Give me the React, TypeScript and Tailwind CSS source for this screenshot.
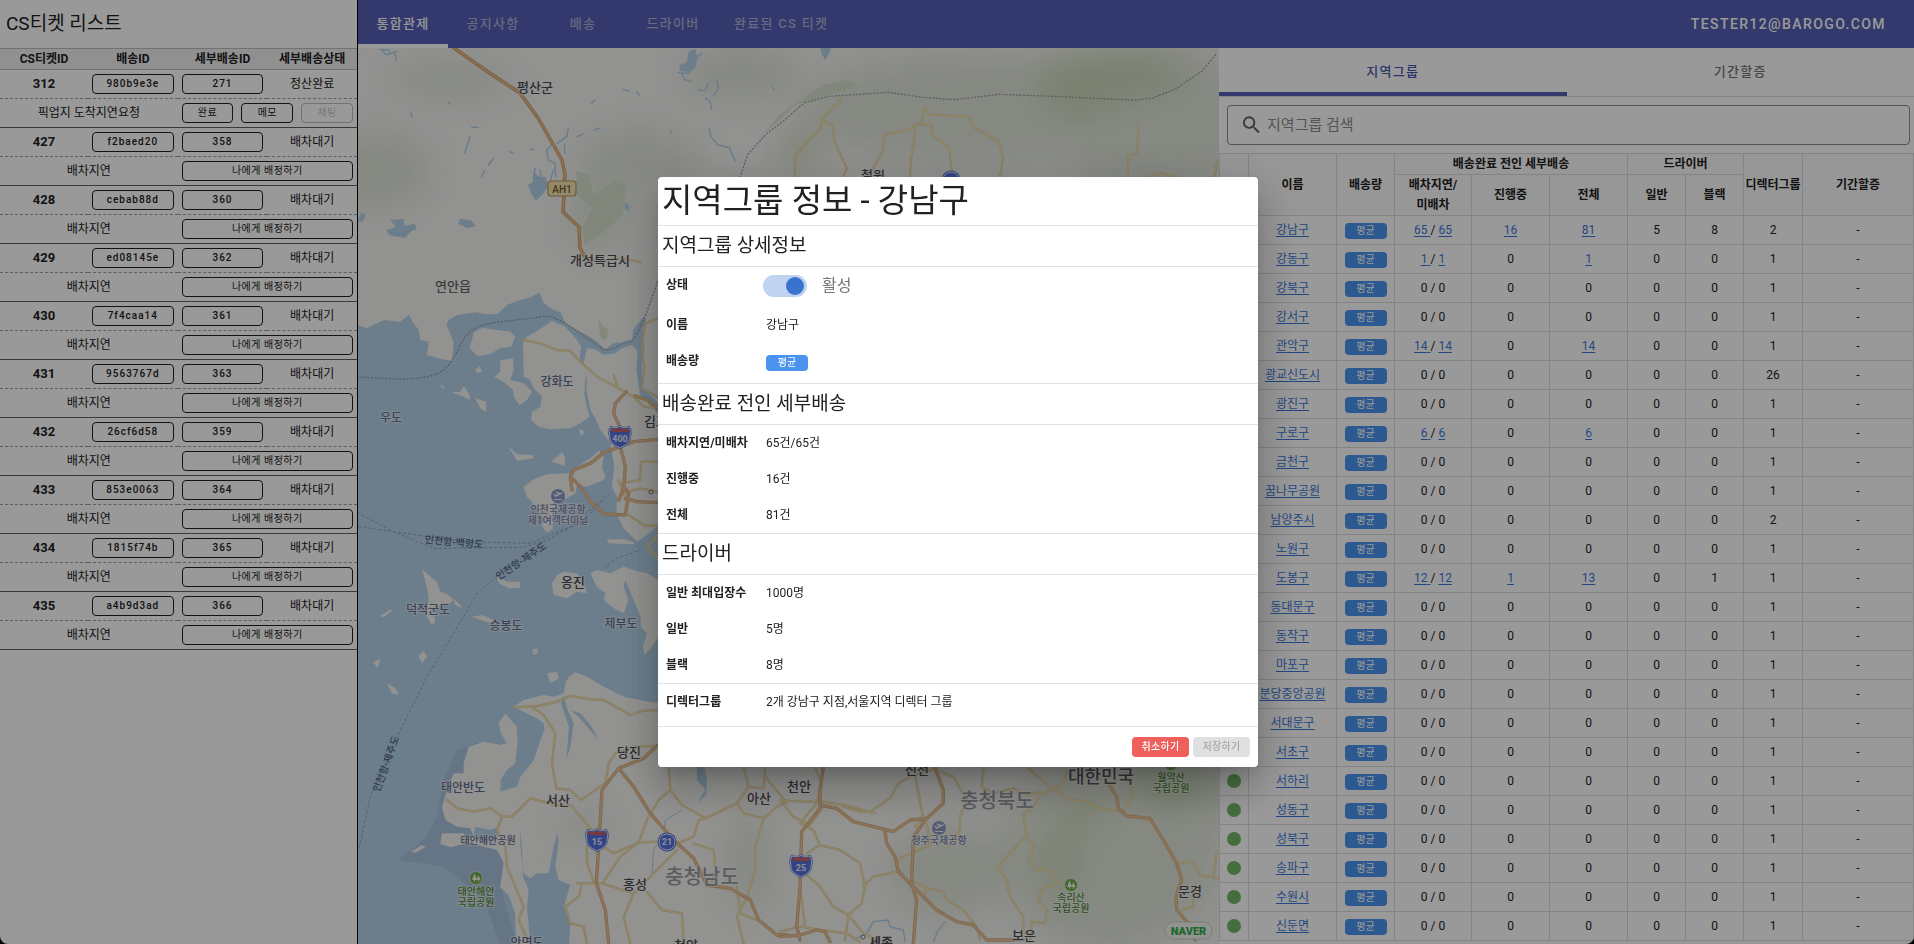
import type { ReactNode } from "react";
import { MdSearch } from "react-icons/md";

const FONT = "font-[Roboto,'Noto_Sans_CJK_KR',sans-serif]";

type Ticket = { id: number; delivery: string; sub: number; status: string; reason: string; mine?: boolean };

const tickets: Ticket[] = [
  { id: 312, delivery: "980b9e3e", sub: 271, status: "정산완료", reason: "픽업지 도착지연요청", mine: true },
  { id: 427, delivery: "f2baed20", sub: 358, status: "배차대기", reason: "배차지연" },
  { id: 428, delivery: "cebab88d", sub: 360, status: "배차대기", reason: "배차지연" },
  { id: 429, delivery: "ed08145e", sub: 362, status: "배차대기", reason: "배차지연" },
  { id: 430, delivery: "7f4caa14", sub: 361, status: "배차대기", reason: "배차지연" },
  { id: 431, delivery: "9563767d", sub: 363, status: "배차대기", reason: "배차지연" },
  { id: 432, delivery: "26cf6d58", sub: 359, status: "배차대기", reason: "배차지연" },
  { id: 433, delivery: "853e0063", sub: 364, status: "배차대기", reason: "배차지연" },
  { id: 434, delivery: "1815f74b", sub: 365, status: "배차대기", reason: "배차지연" },
  { id: 435, delivery: "a4b9d3ad", sub: 366, status: "배차대기", reason: "배차지연" },
];

type Region = { name: string; late?: number; wait?: number; going?: number; total?: number; normal?: number; black?: number; director?: number };

const regions: Region[] = [
  { name: "강남구", late: 65, wait: 65, going: 16, total: 81, normal: 5, black: 8, director: 2 },
  { name: "강동구", late: 1, wait: 1, total: 1 },
  { name: "강북구" },
  { name: "강서구" },
  { name: "관악구", late: 14, wait: 14, total: 14 },
  { name: "광교신도시", director: 26 },
  { name: "광진구" },
  { name: "구로구", late: 6, wait: 6, total: 6 },
  { name: "금천구" },
  { name: "꿈나무공원" },
  { name: "남양주시", director: 2 },
  { name: "노원구" },
  { name: "도봉구", late: 12, wait: 12, going: 1, total: 13, black: 1 },
  { name: "동대문구" },
  { name: "동작구" },
  { name: "마포구" },
  { name: "분당중앙공원" },
  { name: "서대문구" },
  { name: "서초구" },
  { name: "서하리" },
  { name: "성동구" },
  { name: "성북구" },
  { name: "송파구" },
  { name: "수원시" },
  { name: "신둔면" },
];

function OutlineButton({ children, disabled, wide }: { children: ReactNode; disabled?: boolean; wide?: boolean }) {
  return (
    <button
      type="button"
      disabled={disabled}
      className={`block h-5 w-full rounded border text-[10px] leading-4 ${wide ? "font-normal tracking-wider" : "font-medium tracking-widest"} ${
        disabled ? "border-black/25 text-black/25" : "border-[#212121] text-[#212121]"
      }`}
    >
      {children}
    </button>
  );
}

function TicketPanel() {
  return (
    <aside className="flex w-[358px] shrink-0 flex-col border-r border-black bg-white">
      <h1 className="h-12 px-1.5 text-[19px] leading-12">CS티켓 리스트</h1>
      <table className="w-full table-fixed border-collapse text-center text-xs">
        <colgroup>
          <col className="w-[88px]" />
          <col />
          <col />
          <col />
        </colgroup>
        <thead className="bg-[#f0f0f0]">
          <tr className="h-[21px] border-y border-[#bdbdbd]">
            {["CS티켓ID", "배송ID", "세부배송ID", "세부배송상태"].map((h) => (
              <th key={h} className="p-0 leading-5 font-bold">{h}</th>
            ))}
          </tr>
        </thead>
        {tickets.map((t) => (
          <tbody key={t.id} className="border-b border-[#616161]">
            <tr className="h-[29px] border-b border-dashed border-[#9e9e9e]">
              <td className="p-0 text-[13px] font-bold">{t.id}</td>
              <td className="px-1 py-0"><OutlineButton>{t.delivery}</OutlineButton></td>
              <td className="px-1 py-0"><OutlineButton>{t.sub}</OutlineButton></td>
              <td className="p-0">{t.status}</td>
            </tr>
            <tr className="h-[29px]">
              <td colSpan={2} className="p-0">{t.reason}</td>
              <td colSpan={2} className="px-1 py-0">
                {t.mine ? (
                  <div className="flex gap-2">
                    <OutlineButton wide>완료</OutlineButton>
                    <OutlineButton wide>메모</OutlineButton>
                    <OutlineButton wide disabled>채팅</OutlineButton>
                  </div>
                ) : (
                  <OutlineButton wide>나에게 배정하기</OutlineButton>
                )}
              </td>
            </tr>
          </tbody>
        ))}
      </table>
    </aside>
  );
}

function TopBar() {
  return (
    <header className="flex h-12 shrink-0 items-stretch bg-[#5560b4] text-white">
      <nav className="flex text-[13px] font-medium tracking-widest">
        {["통합관제", "공지사항", "배송", "드라이버", "완료된 CS 티켓"].map((label, i) => (
          <a
            key={label}
            href="#"
            className={`flex min-w-[90px] items-center justify-center border-y-4 border-t-transparent px-4 ${
              i === 0 ? "border-b-white" : "border-b-transparent text-white/50"
            }`}
          >
            {label}
          </a>
        ))}
      </nav>
      <button type="button" className="ml-auto px-7 text-sm font-medium tracking-widest uppercase">tester12@barogo.com</button>
    </header>
  );
}

function Volume() {
  return (
    <span className="block h-4 w-[42px] rounded bg-[#4a94f0] text-center text-[10px] leading-4 text-white">평균</span>
  );
}

function Count({ value, children }: { value: number; children?: ReactNode }) {
  if (!value) return <>0{children}</>;
  return (
    <a href="#" className="text-[#3b78d8] underline underline-offset-2">{value}{children}</a>
  );
}

function RegionPanel() {
  const th = "border border-[#dcdcdc] p-0 font-bold";
  const td = "border border-[#dcdcdc] p-0";
  return (
    <section className="flex w-[695px] shrink-0 flex-col overflow-hidden bg-white">
      <div className="flex h-[49px] shrink-0 border-b border-[#dcdcdc] text-[13px] font-medium tracking-widest">
        <button type="button" className="flex-1 border-y-4 border-t-transparent border-b-[#5560b4] text-[#4a55b0]">지역그룹</button>
        <button type="button" className="flex-1 border-y-4 border-transparent text-[#757575]">기간할증</button>
      </div>
      <label className="mx-2 mt-2 mb-2 mr-1 flex h-10 shrink-0 items-center gap-1 rounded border border-[#8c8c8c] pl-3">
        <MdSearch className="size-6 text-[#616161]" />
        <input
          type="search"
          aria-label="지역그룹 검색"
          placeholder="지역그룹 검색"
          className="w-full bg-transparent text-[15px] outline-none placeholder:text-[#8c8c8c]"
        />
      </label>
      <table className="w-full table-fixed border-collapse text-center text-xs">
        <colgroup>
          <col className="w-[29px]" />
          <col className="w-[88px]" />
          <col className="w-[58px]" />
          <col className="w-[77px]" />
          <col className="w-[78px]" />
          <col className="w-[78px]" />
          <col className="w-[58px]" />
          <col className="w-[58px]" />
          <col className="w-[59px]" />
          <col />
        </colgroup>
        <thead className="bg-[#fcfcfc]">
          <tr className="h-[21px]">
            <th rowSpan={2} className={th} />
            <th rowSpan={2} className={th}>이름</th>
            <th rowSpan={2} className={th}>배송량</th>
            <th colSpan={3} className={th}>배송완료 전인 세부배송</th>
            <th colSpan={2} className={th}>드라이버</th>
            <th rowSpan={2} className={th}>디렉터그룹</th>
            <th rowSpan={2} className={th}>기간할증</th>
          </tr>
          <tr className="h-[41px] leading-5">
            <th className={th}>배차지연/<br />미배차</th>
            <th className={th}>진행중</th>
            <th className={th}>전체</th>
            <th className={th}>일반</th>
            <th className={th}>블랙</th>
          </tr>
        </thead>
        <tbody>
          {regions.map((r) => (
            <tr key={r.name} className="h-[29px] whitespace-nowrap">
              <td className={td}><span className="mx-auto block size-3.5 rounded-full bg-[#72b866]" /></td>
              <td className={td}><a href="#" className="text-[#3b78d8] underline underline-offset-2">{r.name}</a></td>
              <td className={`${td} pt-0.5`}><span className="flex justify-center"><Volume /></span></td>
              <td className={td}><Count value={r.late ?? 0}> </Count>{"/ "}<Count value={r.wait ?? 0} /></td>
              <td className={td}><Count value={r.going ?? 0} /></td>
              <td className={td}><Count value={r.total ?? 0} /></td>
              <td className={td}>{r.normal ?? 0}</td>
              <td className={td}>{r.black ?? 0}</td>
              <td className={td}>{r.director ?? 1}</td>
              <td className={td}>-</td>
            </tr>
          ))}
        </tbody>
      </table>
    </section>
  );
}

/* ---------- map ---------- */

const SEA =
  "M0,135 30,145 55,132 80,120 130,125 155,105 170,130 185,150 190,180 215,185 210,225 250,236 285,242 290,190 280,160 268,135 275,120 300,105 355,97 385,103 420,103 450,75 490,60 520,52 548,38 560,70 590,90 610,95 625,130 660,150 690,165 720,185 745,208 770,190 800,185 825,178 828,150 835,140 860,110 868,118 856,150 862,200 855,250 855,320 905,370 905,402 850,345 838,270 842,215 825,195 795,205 775,220 740,225 715,208 690,205 680,250 690,300 688,330 700,390 718,420 730,450 760,490 772,560 765,620 780,650 778,700 800,745 840,785 870,765 905,735 1100,900 1100,1290 905,1270 860,1262 800,1250 740,1220 690,1190 655,1177 635,1190 625,1210 620,1240 590,1250 560,1245 500,1260 470,1280 500,1295 540,1315 560,1330 562,1350 550,1380 530,1440 490,1490 480,1520 430,1535 430,1500 450,1470 475,1450 480,1400 495,1350 470,1330 445,1300 425,1330 432,1360 450,1390 430,1395 380,1385 335,1400 320,1450 320,1480 290,1480 270,1530 255,1580 265,1620 300,1640 340,1645 370,1680 320,1650 250,1660 250,1695 320,1705 420,1705 440,1750 430,1820 455,1845 475,1900 478,1995 0,1995Z";

const ISLANDS = [
  "M350,158 375,143 420,150 460,155 475,170 462,200 430,205 400,222 362,228 338,205Z",
  "M498,180 510,170 545,150 585,122 625,140 660,180 672,200 668,235 690,260 685,300 682,345 690,380 698,410 670,430 640,445 580,448 545,440 522,420 525,395 550,380 555,350 530,325 520,300 500,290Z",
  "M430,240 468,235 470,270 460,300 500,310 525,335 510,360 488,375 470,350 468,330 440,305 412,290 430,275Z",
  "M283,337 310,335 320,318 338,345 340,360 315,348Z M355,355 388,365 388,397 370,385Z M248,313 268,325 255,325Z M355,270 368,258 375,275 360,278Z",
  "M450,497 480,522 530,525 528,535 480,542 470,525Z M582,545 600,530 615,517 625,535 622,558 600,550Z M665,445 685,455 672,467Z",
  "M500,620 530,598 570,583 640,580 660,560 700,535 725,512 740,530 735,565 745,585 740,600 690,620 660,615 655,640 630,655 590,662 595,690 585,700 588,745 570,758 555,740 560,715 545,690 510,650Z",
  "M750,778 800,778 832,786 830,793 755,790Z M420,890 450,905 490,905 488,925 455,925 425,910Z",
  "M195,868 215,885 240,905 250,935 270,942 290,960 280,970 240,980 232,1000 235,1025 225,1035 210,1010 215,950 208,915Z M290,955 310,975 315,985 295,975Z",
  "M585,910 600,885 620,875 660,880 680,910 690,940 660,935 630,955 590,945Z",
  "M700,880 720,870 760,880 800,860 838,872 870,880 905,900 905,1070 885,1100 862,1125 858,1100 870,1060 852,1040 850,1010 830,960 805,900 800,920 815,960 800,1000 770,985 740,960 745,940 720,920Z",
  "M185,1128 200,1112 210,1130 195,1150Z M90,1210 115,1225 125,1245 105,1240Z M48,1145 70,1138 62,1165Z M345,1010 375,1005 410,1020 400,1030Z M525,1110 540,1105 542,1120 530,1125Z M570,1180 600,1175 605,1195 580,1210Z M70,1008 100,988 105,992 80,1012Z",
  "M255,1660 320,1660 330,1690 280,1702 250,1692Z M160,1715 195,1695 205,1702 175,1718Z",
];

const BAYS = [
  "M488,1645 495,1700 498,1790 515,1830 510,1880 520,1995 636,1995 640,1930 620,1880 640,1815 605,1800 595,1760 605,1680 600,1660 590,1700 575,1780 540,1780 520,1795 500,1780 492,1720Z",
  "M620,1245 632,1290 650,1330 640,1400 628,1440 636,1340 612,1270Z",
  "M640,1290 670,1300 700,1335 725,1380 690,1340 665,1310Z",
  "M355,1640 400,1650 425,1640 420,1680 380,1690 350,1665Z",
  "M1020,1462 1042,1462 1050,1500 1048,1545 1020,1570 1045,1530 1020,1500Z",
];

const PONDS =
  "M90,148l25,2l8,10l18,-6M98,152l10,12l18,-4M135,160l4,22M302,312l-8,-6M182,335l4,16M360,410l-8,25l-8,25M365,382h20M1055,160l-15,15M1035,185l-10,25l-12,10l-28,-2M995,220l10,20l20,5M1045,270l20,2l10,-20M1420,148l8,20l-4,10M1078,385l5,25l20,25l35,8l18,40M735,300l-10,10M655,385l-5,25l-28,20M748,385l-15,5M700,402l-20,8M610,430l-20,20l5,30l20,10l2,40M645,460l-2,-28M555,505l-5,30M570,512l5,28M610,510l-8,30M540,448h12M480,455l10,6M430,475l-15,20M405,510l-10,20M1065,295l15,8l5,25M1100,240l6,25l-14,20M820,268l18,6M860,275l8,10M1268,262l5,8M960,392l4,8";
const LAKES =
  "M60,515l25,-2l2,20l18,-6l4,15l-10,8l-12,20l-28,-8l-6,-16l18,-8z M188,512l20,5l8,18l-14,6l-18,-14z M312,410l8,-8l2,-30l10,14l12,0l4,30l-10,24l-12,18l-8,-20z M488,462l8,10l0,20l-8,-10z M0,520l8,-28l8,10l-6,20z M605,10l12,-8l4,30l-4,28l-12,12l-18,-4l2,-18l12,-6z M845,0h18v10l-8,24l-8,-12z";

const MINOR = [
  ["translate(357 470)", "M470,712L545,708L600,695L640,678L700,688L740,690L820,735L860,722L903,720 M525,712L560,735L595,790L585,880L598,955L640,960L672,990L745,940L755,880L775,850L830,830L900,828 M270,990L300,1015L350,1025L400,1015L435,1040L465,1040L520,985L600,1005L640,1005L700,1075 M435,1040L420,1080L445,1130L450,1190L500,1310L485,1350L515,1420 M845,1118L870,1050L905,990L940,960L935,890 M940,960L975,1005L1045,1045L1140,1000L1175,950L1160,890 M845,1118L900,1115L960,1120L1010,1100L1025,1050L1045,1045 M700,1080L720,1120L770,1150L845,1118 M740,1235L790,1160L845,1118 M660,1240L735,1240L830,1270L870,1230L960,1140 M830,1270L800,1340L820,1422 M870,1265L915,1320L975,1330L980,1422 M690,1130L690,1180L710,1235 M640,1360L625,1310L665,1280L675,1240 M640,1360L680,1370L690,1422 M1010,1120L1070,1140L1075,1200L1060,1250 M1140,1000L1160,1030L1220,1045L1260,1010L1290,995 M1220,1045L1195,1130L1195,1200L1170,1280L1140,1340L1160,1422 M1175,950L1220,955L1225,890 M1225,920L1290,1000 M1140,1250L1150,1330L1200,1350 M870,230L903,195 M870,230L903,265"],
  ["translate(357 280)", "M498,180L550,190L600,210L640,212L670,245L720,290L780,322L830,350L860,380L903,385 M770,285L782,322 M903,115L865,130L855,200L862,260L855,325L903,352 M903,545L852,545L850,600L790,610L800,640L850,625L903,635 M815,705L860,735L903,738 M785,600L800,645"],
  ["translate(780 740)", "M105,82L125,130L110,190L60,250L100,270L120,315L180,330L240,370L255,440L245,490L205,525L195,600 M0,180L60,185L130,185L190,195L270,215L330,175L355,130L400,105L470,85 M190,200L240,215L285,218 M0,180L40,230L90,255L130,200 M120,315L80,340 M75,400L120,440L160,500L205,525L250,580L290,600 M405,105L430,235L405,260 M480,95L520,110L560,180L540,230L540,270L505,320 M610,85L605,140L640,160L700,145L740,165L780,155 M745,85L800,130L820,150 M820,150L780,165L760,200L730,225L740,285L690,340L650,385L680,420L690,470L730,530L730,600 M735,290L765,320L745,355L765,390L800,385L835,430L790,445L775,480L800,510L795,550L755,545L750,600 M820,145L870,180L920,185L960,205L1020,215 M820,148L850,130L860,95 M1030,215L1055,170L1045,100 M1190,370L1240,365L1260,405L1315,415 M1310,340L1300,410 M395,440L350,380L360,355L450,315L440,250 M405,425L440,445L490,455L500,480L550,510L590,560L600,600 M430,470L440,445 M250,440L280,410L350,395 M0,575L60,560L120,570L200,580L240,605 M60,440L75,560 M1240,440L1240,500L1205,510"],
];

const NORTH_MINOR =
  "M883,150L848,215L845,240L800,320L798,390 M848,215L868,235L870,280L893,360L885,390 M1035,178L1028,225L1005,245L962,260L958,310L940,365 M1035,178L1045,200L1115,205L1125,240L1170,280L1178,330L1172,390 M1018,230L1015,290L1010,330L1008,390 M1028,230H1048L1048,260L1080,300L1084,370 M1425,235L1422,318L1407,320L1405,390 M1440,390L1465,375L1490,385 M1568,340L1563,390 M415,625L440,640L480,630L518,643";

const MAJOR = [
  ["translate(357 280)", "M808,335L775,370L770,400L788,440L790,500L805,560L800,625L785,660 M903,478L830,485L740,518L700,550L650,570L640,590L645,630 M640,590L670,620L705,670L740,702L805,705L815,640L800,620 M805,655L840,665L903,668 M835,348L870,360L903,385"],
  ["translate(357 470)", "M903,825L860,865L785,895L735,960L728,1080L718,1240L745,1320L755,1422 M785,895L830,950L880,1030L950,1110L1010,1165L1050,1245L1120,1255L1180,1290L1205,1350L1260,1395L1290,1395"],
  ["translate(780 740)", "M130,82L120,150L120,205L65,275L60,440L50,560L60,600 M120,195L170,205L220,245L340,275L390,240L440,235L490,190L490,150L475,110L465,82 M440,235L400,290L395,430L410,480L400,612 M315,275L320,310L345,350L355,395L400,440L470,510L530,545L580,555L620,600L700,600 M985,130L1010,170L1015,205L1040,228L1110,235L1150,300L1190,370L1205,420L1188,470L1190,510L1225,550L1245,600 M0,590L60,585L110,570L135,575L150,605"],
];

type Label = { x: number; y: number; t: string; s?: number; c?: string; r?: number; w?: number };
const DARK = "#4a4a50";
const BLUE = "#626f93";
const GREEN = "#4d8a3a";
const labels: Label[] = [
  { x: 535, y: 87, t: "평산군" },
  { x: 600, y: 260, t: "개성특급시" },
  { x: 453, y: 286, t: "연안읍", c: "#666" },
  { x: 873, y: 175, t: "철원" },
  { x: 557, y: 382, t: "강화도", c: BLUE, s: 12 },
  { x: 391, y: 418, t: "우도", c: BLUE, s: 12 },
  { x: 656, y: 421, t: "김포" },
  { x: 558, y: 509, t: "인천국제공항", c: "#7881ac", s: 10 },
  { x: 558, y: 520, t: "제1여객터미널", c: "#7881ac", s: 10 },
  { x: 454, y: 542, t: "인천항-백령도", c: "#52647c", s: 10, r: 5 },
  { x: 521, y: 561, t: "인천항-제주도", c: "#52647c", s: 10, r: -34 },
  { x: 386, y: 764, t: "인천항-제주도", c: "#52647c", s: 10, r: -70 },
  { x: 573, y: 582, t: "옹진" },
  { x: 428, y: 610, t: "덕적군도", c: BLUE, s: 12 },
  { x: 506, y: 626, t: "승봉도", c: BLUE, s: 12 },
  { x: 621, y: 624, t: "제부도", c: BLUE, s: 12 },
  { x: 629, y: 752, t: "당진" },
  { x: 463, y: 788, t: "태안반도", c: BLUE, s: 12 },
  { x: 558, y: 800, t: "서산" },
  { x: 759, y: 798, t: "아산" },
  { x: 799, y: 786, t: "천안" },
  { x: 488, y: 840, t: "태안해안공원", c: BLUE, s: 10 },
  { x: 702, y: 877, t: "충청남도", c: "#96999f", s: 20 },
  { x: 635, y: 884, t: "홍성" },
  { x: 476, y: 891, t: "태안해안", c: GREEN, s: 10 },
  { x: 476, y: 902, t: "국립공원", c: GREEN, s: 10 },
  { x: 527, y: 943, t: "안면도", c: BLUE, s: 12 },
  { x: 686, y: 945, t: "청양" },
  { x: 997, y: 801, t: "충청북도", c: "#96999f", s: 20 },
  { x: 917, y: 769, t: "진천" },
  { x: 939, y: 840, t: "청주국제공항", c: "#7881ac", s: 10 },
  { x: 1101, y: 777, t: "대한민국", c: "#5a5a60", s: 18 },
  { x: 1171, y: 777, t: "월악산", c: GREEN, s: 10 },
  { x: 1171, y: 788, t: "국립공원", c: GREEN, s: 10 },
  { x: 1071, y: 897, t: "속리산", c: GREEN, s: 10 },
  { x: 1071, y: 908, t: "국립공원", c: GREEN, s: 10 },
  { x: 1190, y: 891, t: "문경" },
  { x: 1024, y: 935, t: "보은" },
  { x: 881, y: 942, t: "세종", w: 700 },
];

function Shield({ x, y, n }: { x: number; y: number; n: string }) {
  return (
    <g transform={`translate(${x} ${y})`}>
      <path d="M-9,-10Q-5,-8 0,-10.500Q5,-8 9,-10Q12,-6 10,0Q11,6 0,11Q-11,6 -10,0Q-12,-6 -9,-10Z" fill="#5572dc" stroke="#5572dc" strokeWidth="2" />
      <path d="M-9,-10Q-5,-8 0,-10.500Q5,-8 9,-10Q12,-6 10,0Q11,6 0,11Q-11,6 -10,0Q-12,-6 -9,-10Z" fill="#5572dc" stroke="#e8ecfa" strokeWidth="1" />
      <path d="M-7.500,-8.500H7.500L9,-5H-9Z" fill="#c8606a" />
      <text y="5" textAnchor="middle" fontSize="9" fontWeight="700" fill="#e8ecfa">{n}</text>
    </g>
  );
}

function ParkIcon({ x, y }: { x: number; y: number }) {
  return (
    <g transform={`translate(${x} ${y})`}>
      <circle r="6.500" fill="#74a852" stroke="#d6efc4" strokeWidth="0.800" />
      <path d="M-1.500,-4.500L1,2H-1V3.500H-2V2H-4Z M2.500,-2.500L4.500,2H3V3.500H2V2H1.300L0.800,0.500Z" fill="#f2f8ec" />
    </g>
  );
}

function AirportIcon({ x, y }: { x: number; y: number }) {
  return (
    <g transform={`translate(${x} ${y})`}>
      <circle r="7" fill="#8f98c4" />
      <path d="M-4.500,-1.500L-3.500,-2L-2,-1L0,-2L-2.500,-4L-1.500,-4.500L2,-3L4.500,-3.800L5,-3L-2.500,1Z M-4,3H4V4H-4Z" fill="#f2f3fa" />
    </g>
  );
}

function MapView() {
  return (
    <svg
      viewBox="358 48 861 896"
      preserveAspectRatio="xMidYMid slice"
      role="img"
      aria-label="지도"
      className="h-full w-full bg-[#f3f3f1]"
    >
      <defs>
        <filter id="soft" x="-30%" y="-30%" width="160%" height="160%">
          <feGaussianBlur stdDeviation="16" />
        </filter>
      </defs>
      <g filter="url(#soft)">
        <g fill="#dfe4d8">
          <ellipse cx="375" cy="170" rx="55" ry="38" />
          <ellipse cx="640" cy="160" rx="60" ry="30" />
          <ellipse cx="740" cy="75" rx="60" ry="25" />
          <ellipse cx="980" cy="110" rx="180" ry="55" />
          <ellipse cx="1150" cy="120" rx="100" ry="80" />
          <ellipse cx="600" cy="215" rx="28" ry="36" />
          <ellipse cx="950" cy="870" rx="60" ry="45" />
          <ellipse cx="1110" cy="850" rx="110" ry="100" />
          <ellipse cx="1190" cy="800" rx="50" ry="50" />
          <ellipse cx="750" cy="860" rx="22" ry="50" />
          <ellipse cx="585" cy="825" rx="20" ry="14" />
          <ellipse cx="450" cy="80" rx="60" ry="16" />
        </g>
        <g fill="#cdd9bd">
          <ellipse cx="1110" cy="75" rx="75" ry="26" />
          <ellipse cx="1080" cy="100" rx="40" ry="18" />
          <ellipse cx="800" cy="150" rx="20" ry="18" />
          <ellipse cx="1085" cy="815" rx="24" ry="16" />
          <ellipse cx="1060" cy="860" rx="18" ry="36" />
          <ellipse cx="1170" cy="785" rx="36" ry="24" />
        </g>
      </g>
      <path transform="translate(357 48) scale(.5485 .3333)" d="M400,370L425,380L430,440L470,400L490,410L485,500L460,540L415,590L410,540L430,480L400,440Z M770,200L850,110L895,95L915,115L870,135L800,170L740,260Z" fill="#d5dfc8" opacity="0.8" />

      <g transform="translate(357 280) scale(.33333)">
        <path d={SEA} fill="#b5d2ea" />
        <path d="M120,1740L200,1680L240,1610L260,1500L300,1410L355,1390L380,1385L380,1500L440,1750L430,1820L480,1995L430,1995L380,1860L260,1760Z" fill="#aac4de" />
        <path
          d="M335,1400L320,1450L320,1480L290,1480L270,1530L255,1580L265,1620L300,1640L340,1645L350,1670L300,1680L420,1710L440,1750L430,1820L455,1845L475,1900L478,1995H520L510,1880L515,1830L498,1790L488,1645L560,1500L430,1535L430,1395L380,1385Z"
          fill="#f3f3f1"
        />
        {ISLANDS.map((d) => <path key={d} d={d} fill="#f3f3f1" />)}
        {BAYS.map((d) => <path key={d} d={d} fill="#b5d2ea" />)}
        <path d="M478,1320L510,1305L545,1330L550,1380L530,1440L490,1490L430,1535L440,1490L478,1450L482,1390Z" fill="#b5d2ea" />
        <path d="M725,115L738,140L755,150L750,175L735,182L728,160Z" fill="#dbe5c8" />
      </g>

      <g fill="none" stroke="#abcde8" strokeLinecap="round">
        <g transform="translate(350 0) scale(.33333)"><path strokeWidth="4" d={PONDS} /></g>
        <g transform="translate(780 740) scale(.33333)"><path strokeWidth="4" d="M220,600L260,580L280,545L325,540L330,560L370,570L375,605 M460,605L475,570L495,545" /></g>
        <g transform="translate(357 470) scale(.33333)"><path strokeWidth="3" d="M975,1020L925,1050L920,1100L890,1140L885,1210" /></g>
      </g>
      <path transform="translate(357 48) scale(.5485 .3333)" d={LAKES} fill="#b5d2ea" />

      <g fill="none" stroke="#94979c" strokeWidth="1.200" strokeDasharray="2 1.500">
        <path transform="translate(357 280) scale(.33333)" vectorEffect="non-scaling-stroke" d="M0,290C80,296 170,302 220,288C300,270 300,180 345,150C390,120 480,125 560,108C620,110 680,175 745,210C770,212 790,188 825,185C850,150 870,100 903,0" />
        <path transform="translate(357 48) scale(.5485 .3333)" vectorEffect="non-scaling-stroke" d="M698,390L712,320L745,260L780,215L815,165L860,145L970,133L1030,148L1090,155L1170,139L1300,147L1420,157L1450,150L1490,125L1540,70L1568,15" />
      </g>
      <g fill="none" stroke="#8aa2bf" strokeWidth="1" strokeDasharray="3 2">
        <path transform="translate(357 470) scale(.33333)" vectorEffect="non-scaling-stroke" d="M0,128L110,185L230,235L500,232L570,210L680,150L740,90 M5,170L180,195L330,215L520,220L640,170L765,65 M555,225L430,310L360,370L290,490L210,620L120,800L40,980L5,1140 M740,295L780,265L850,240" />
      </g>

      <g fill="none" strokeLinejoin="round" strokeLinecap="round">
        {MINOR.map(([t, d]) => (
          <g key={t} transform={`${t} scale(.33333)`}>
            <path d={d} stroke="#dccb9c" strokeWidth="7" />
            <path d={d} stroke="#f1dfae" strokeWidth="4" />
          </g>
        ))}
        <g transform="translate(357 48) scale(.5485 .3333)">
          <path d={NORTH_MINOR} stroke="#dccb9c" strokeWidth="2.200" vectorEffect="non-scaling-stroke" />
          <path d={NORTH_MINOR} stroke="#f1dfae" strokeWidth="1.200" vectorEffect="non-scaling-stroke" />
        </g>
        {MAJOR.map(([t, d]) => (
          <g key={t} transform={`${t} scale(.33333)`}>
            <path d={d} stroke="#cfa77c" strokeWidth="10" />
            <path d={d} stroke="#e8c294" strokeWidth="6" />
          </g>
        ))}
        <path d="M454,48L488,72L520,93L538,118L562,160L565,175L563,212L579,227L580,248L585,257" stroke="#c79a68" strokeWidth="3.500" />
        <path d="M454,48L488,72L520,93L538,118L562,160L565,175L563,212L579,227L580,248L585,257" stroke="#e6bb84" strokeWidth="2" />
      </g>

      <rect x="548" y="181" width="28" height="15" rx="3" fill="#f5e6b4" stroke="#bf9558" strokeWidth="1.200" />
      <text x="562" y="192.500" textAnchor="middle" fontSize="10" fontWeight="500" fill="#7a5a2a">AH1</text>

      <Shield x={620} y={437} n="400" />
      <Shield x={597} y={840} n="15" />
      <Shield x={801} y={866} n="25" />
      <g textAnchor="middle" fontSize="9" fontWeight="700" fill="#e8ecfa">
        <circle cx="667" cy="842" r="9.500" fill="#5572dc" />
        <circle cx="667" cy="842" r="8" fill="#5572dc" stroke="#e8ecfa" />
        <text x="667" y="845">21</text>
        <circle cx="951" cy="180" r="9.500" fill="#5572dc" />
        <circle cx="951" cy="180" r="8" fill="#5572dc" stroke="#e8ecfa" />
      </g>
      <circle cx="651" cy="492" r="2" fill="#fff" stroke="#666" />
      <circle cx="863" cy="937" r="2" fill="#fff" stroke="#777" />
      <AirportIcon x={558} y={496} />
      <AirportIcon x={939} y={828} />
      <ParkIcon x={476} y={878} />
      <ParkIcon x={1071} y={885} />
      <ParkIcon x={1171} y={764} />

      <g textAnchor="middle" stroke="#f5f4f2" strokeWidth="2" strokeLinejoin="round" paintOrder="stroke">
        {labels.map((l) => {
          const size = l.s ?? 13;
          return (
            <text
              key={`${l.t}${l.x}${l.y}`}
              x={l.x}
              y={l.y}
              dy="0.36em"
              fontSize={size}
              fontWeight={l.w ?? 500}
              fill={l.c ?? DARK}
              strokeOpacity={l.r ? 0 : 0.6}
              transform={l.r ? `rotate(${l.r} ${l.x} ${l.y})` : undefined}
            >
              {l.t}
            </text>
          );
        })}
      </g>

      <rect x="1165" y="922" width="47" height="17" rx="8.500" fill="#f3f3f1" stroke="#cfcfcf" />
      <text x="1188.500" y="934.500" textAnchor="middle" fontSize="11" fontWeight="900" fill="#35b04f">NAVER</text>
    </svg>
  );
}

/* ---------- dialog ---------- */

function Row({ label, children, className = "h-9" }: { label: string; children: ReactNode; className?: string }) {
  return (
    <div className={`flex px-2 ${className}`}>
      <dt className="w-[100px] shrink-0 py-2 leading-5 font-bold">{label}</dt>
      <dd className="py-2 leading-5">{children}</dd>
    </div>
  );
}

function Heading({ children }: { children: ReactNode }) {
  return <h3 className="border-b border-[#e0e0e0] px-1 text-[19px] leading-10">{children}</h3>;
}

function RegionDialog() {
  const group = "border-b border-[#e0e0e0]";
  return (
    <div className="fixed inset-0 z-10 flex items-center justify-center bg-black/40 pl-0.5">
      <div
        role="dialog"
        aria-labelledby="dialog-title"
        className="w-[600px] rounded bg-white text-xs text-[#212121] shadow-[0_11px_15px_-7px_rgba(0,0,0,0.2),0_24px_38px_3px_rgba(0,0,0,0.14),0_9px_46px_8px_rgba(0,0,0,0.12)]"
      >
        <h2 id="dialog-title" className="border-b border-[#e0e0e0] px-1 text-[33px] leading-12">지역그룹 정보 - 강남구</h2>
        <Heading>지역그룹 상세정보</Heading>
        <dl className={group}>
          <Row label="상태" className="h-10">
            <label className="-ml-[3px] flex h-[22px] items-center gap-[15px] text-base text-[#757575]">
              <input type="checkbox" role="switch" defaultChecked className="peer sr-only" />
              <span className="flex h-[22px] w-11 items-center justify-end rounded-full bg-[#c0d3f0] px-[3px]">
                <span className="size-[18px] rounded-full bg-[#3874cf]" />
              </span>
              활성
            </label>
          </Row>
          <Row label="이름">강남구</Row>
          <Row label="배송량" className="h-10">
            <span className="flex pt-1"><Volume /></span>
          </Row>
        </dl>
        <Heading>배송완료 전인 세부배송</Heading>
        <dl className={group}>
          <Row label="배차지연/미배차">65건/65건</Row>
          <Row label="진행중">16건</Row>
          <Row label="전체">81건</Row>
        </dl>
        <Heading>드라이버</Heading>
        <dl className={group}>
          <Row label="일반 최대입장수">1000명</Row>
          <Row label="일반">5명</Row>
          <Row label="블랙">8명</Row>
        </dl>
        <dl className={group}>
          <Row label="디렉터그룹" className="h-[42px]">2개 강남구 지점,서울지역 디렉터 그룹</Row>
        </dl>
        <div className="flex justify-end gap-1 px-2 py-2.5 text-[10px] leading-5 font-medium">
          <button type="button" className="w-[57px] rounded bg-[#ef5f5b] tracking-wide text-white">취소하기</button>
          <button type="button" disabled className="w-[57px] rounded bg-[#e0e0e0] tracking-wide text-[#a6a6a6]">저장하기</button>
        </div>
      </div>
    </div>
  );
}

export default function App() {
  return (
    <div className={`h-screen bg-black text-[#212121] ${FONT}`}>
      <div className="flex h-full overflow-hidden rounded-b-lg">
        <TicketPanel />
        <div className="flex min-w-0 flex-1 flex-col">
          <TopBar />
          <div className="flex min-h-0 flex-1">
            <main className="min-w-0 flex-1">
              <MapView />
            </main>
            <RegionPanel />
          </div>
        </div>
      </div>
      <RegionDialog />
    </div>
  );
}
